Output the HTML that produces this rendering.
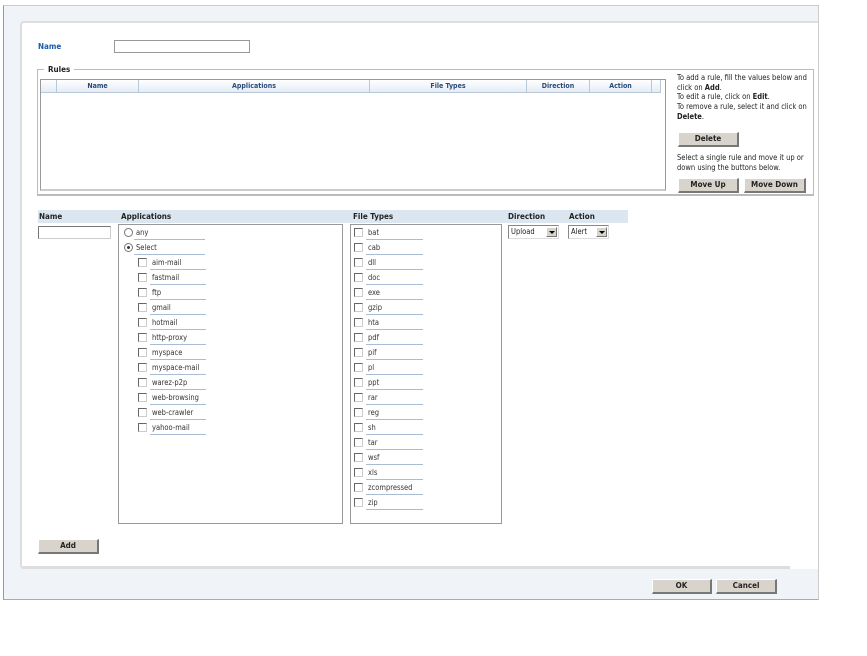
<!DOCTYPE html>
<html><head><style>
*{margin:0;padding:0;box-sizing:border-box}
body{width:867px;height:656px;background:#fff;position:relative;font-family:"DejaVu Sans Condensed","Liberation Sans",sans-serif;font-size:8px;color:#222;overflow:hidden}
.a{position:absolute}
.btn{position:absolute;background:#d8d4cc;border:1px solid #fff;border-right:2px solid #777;border-bottom:2px solid #777;font-weight:bold;font-size:8px;text-align:center;line-height:11px;color:#222}
.lab{position:absolute;font-weight:bold;font-size:8px;color:#222}
.th{position:absolute;top:80px;height:13px;border-right:1px solid #b8c8d8;color:#2a4a7a;font-weight:bold;font-size:7px;text-align:center;line-height:13px}
.cb{position:absolute;width:9px;height:9px;border:1px solid #666;border-right-color:#ccc;border-bottom-color:#ccc;background:#fff}
.it{position:absolute;font-size:7.5px;color:#333;border-bottom:1px solid #a8bcd4;height:13px;line-height:11px;padding-left:2px}
.inp{position:absolute;background:#fff;border:1px solid #888;border-right-color:#ddd;border-bottom-color:#ddd}
</style></head><body>
<div class="a" style="left:3px;top:5px;width:816px;height:595px;background:#f0f4f9;border-left:1px solid #999;border-top:1px solid #ccc;border-right:1px solid #ccc;border-bottom:1px solid #aaa"></div>
<div class="a" style="left:20px;top:21px;width:798px;height:548px;background:#fff;border-left:2px solid #ddd;border-top:2px solid #ddd;border-radius:4px 0 0 4px"></div>
<div class="a" style="left:22px;top:566px;width:768px;height:3px;background:#ddd"></div>

<div class="lab" style="left:38px;top:42px;color:#1a5aa8">Name</div>
<div class="inp" style="left:114px;top:40px;width:136px;height:13px;border:1px solid #999"></div>

<div class="a" style="left:37px;top:69px;width:777px;height:127px;border:1px solid #bbb;border-bottom:2px solid #bbb"></div>
<div class="lab" style="left:44px;top:65px;background:#fff;padding:0 4px 0 4px">Rules</div>
<div class="a" style="left:40px;top:79px;width:626px;height:112px;border:1px solid #999;border-bottom:2px solid #ccc;background:#fff"></div>
<div class="a" style="left:41px;top:80px;width:620px;height:13px;background:linear-gradient(#fff,#e4ecf4);border-bottom:1px solid #b8c8d8"></div>
<div class="th" style="left:41px;width:16px"></div>
<div class="th" style="left:57px;width:82px">Name</div>
<div class="th" style="left:139px;width:231px">Applications</div>
<div class="th" style="left:370px;width:157px">File Types</div>
<div class="th" style="left:527px;width:63px">Direction</div>
<div class="th" style="left:590px;width:62px">Action</div>
<div class="th" style="left:652px;width:9px"></div>

<div class="a" style="left:677px;top:73px;width:135px;font-size:7.5px;line-height:9.7px;color:#222">To add a rule, fill the values below and click on <b>Add</b>.<br>To edit a rule, click on <b>Edit</b>.<br>To remove a rule, select it and click on <b>Delete</b>.</div>
<div class="btn" style="left:678px;top:132px;width:61px;height:15px;line-height:12px">Delete</div>
<div class="a" style="left:677px;top:153px;width:135px;font-size:7.5px;line-height:9.7px">Select a single rule and move it up or down using the buttons below.</div>
<div class="btn" style="left:678px;top:178px;width:61px;height:15px;line-height:12px">Move Up</div>
<div class="btn" style="left:744px;top:178px;width:62px;height:15px;line-height:12px">Move Down</div>

<div class="a" style="left:38px;top:210px;width:590px;height:13px;background:#dce6f0"></div>
<div class="lab" style="left:39px;top:212px">Name</div>
<div class="lab" style="left:121px;top:212px">Applications</div>
<div class="lab" style="left:353px;top:212px">File Types</div>
<div class="lab" style="left:508px;top:212px">Direction</div>
<div class="lab" style="left:569px;top:212px">Action</div>

<div class="inp" style="left:38px;top:226px;width:73px;height:13px;border:1px solid #777;border-right-color:#ccc;border-bottom-color:#ccc"></div>

<div class="a" style="left:118px;top:224px;width:225px;height:300px;border:1px solid #999"></div>
<div class="a" style="left:350px;top:224px;width:152px;height:300px;border:1px solid #999"></div>

<div class="a" style="left:124px;top:228px;width:9px;height:9px;border-radius:50%;border:1px solid #777;background:#fff"></div>
<div class="it" style="left:134px;top:227px;width:71px">any</div>
<div class="a" style="left:124px;top:243px;width:9px;height:9px;border-radius:50%;border:1px solid #777;background:radial-gradient(#333 25%,#fff 35%)"></div>
<div class="it" style="left:134px;top:242px;width:71px">Select</div>

<div class="cb" style="left:138px;top:258px"></div><div class="it" style="left:150px;top:257px;width:56px">aim-mail</div>
<div class="cb" style="left:138px;top:273px"></div><div class="it" style="left:150px;top:272px;width:56px">fastmail</div>
<div class="cb" style="left:138px;top:288px"></div><div class="it" style="left:150px;top:287px;width:56px">ftp</div>
<div class="cb" style="left:138px;top:303px"></div><div class="it" style="left:150px;top:302px;width:56px">gmail</div>
<div class="cb" style="left:138px;top:318px"></div><div class="it" style="left:150px;top:317px;width:56px">hotmail</div>
<div class="cb" style="left:138px;top:333px"></div><div class="it" style="left:150px;top:332px;width:56px">http-proxy</div>
<div class="cb" style="left:138px;top:348px"></div><div class="it" style="left:150px;top:347px;width:56px">myspace</div>
<div class="cb" style="left:138px;top:363px"></div><div class="it" style="left:150px;top:362px;width:56px">myspace-mail</div>
<div class="cb" style="left:138px;top:378px"></div><div class="it" style="left:150px;top:377px;width:56px">warez-p2p</div>
<div class="cb" style="left:138px;top:393px"></div><div class="it" style="left:150px;top:392px;width:56px">web-browsing</div>
<div class="cb" style="left:138px;top:408px"></div><div class="it" style="left:150px;top:407px;width:56px">web-crawler</div>
<div class="cb" style="left:138px;top:423px"></div><div class="it" style="left:150px;top:422px;width:56px">yahoo-mail</div>

<div class="cb" style="left:354px;top:228px"></div><div class="it" style="left:366px;top:227px;width:57px">bat</div>
<div class="cb" style="left:354px;top:243px"></div><div class="it" style="left:366px;top:242px;width:57px">cab</div>
<div class="cb" style="left:354px;top:258px"></div><div class="it" style="left:366px;top:257px;width:57px">dll</div>
<div class="cb" style="left:354px;top:273px"></div><div class="it" style="left:366px;top:272px;width:57px">doc</div>
<div class="cb" style="left:354px;top:288px"></div><div class="it" style="left:366px;top:287px;width:57px">exe</div>
<div class="cb" style="left:354px;top:303px"></div><div class="it" style="left:366px;top:302px;width:57px">gzip</div>
<div class="cb" style="left:354px;top:318px"></div><div class="it" style="left:366px;top:317px;width:57px">hta</div>
<div class="cb" style="left:354px;top:333px"></div><div class="it" style="left:366px;top:332px;width:57px">pdf</div>
<div class="cb" style="left:354px;top:348px"></div><div class="it" style="left:366px;top:347px;width:57px">pif</div>
<div class="cb" style="left:354px;top:363px"></div><div class="it" style="left:366px;top:362px;width:57px">pl</div>
<div class="cb" style="left:354px;top:378px"></div><div class="it" style="left:366px;top:377px;width:57px">ppt</div>
<div class="cb" style="left:354px;top:393px"></div><div class="it" style="left:366px;top:392px;width:57px">rar</div>
<div class="cb" style="left:354px;top:408px"></div><div class="it" style="left:366px;top:407px;width:57px">reg</div>
<div class="cb" style="left:354px;top:423px"></div><div class="it" style="left:366px;top:422px;width:57px">sh</div>
<div class="cb" style="left:354px;top:438px"></div><div class="it" style="left:366px;top:437px;width:57px">tar</div>
<div class="cb" style="left:354px;top:453px"></div><div class="it" style="left:366px;top:452px;width:57px">wsf</div>
<div class="cb" style="left:354px;top:468px"></div><div class="it" style="left:366px;top:467px;width:57px">xls</div>
<div class="cb" style="left:354px;top:483px"></div><div class="it" style="left:366px;top:482px;width:57px">zcompressed</div>
<div class="cb" style="left:354px;top:498px"></div><div class="it" style="left:366px;top:497px;width:57px">zip</div>

<div class="inp" style="left:508px;top:225px;width:51px;height:14px;font-size:7.5px;line-height:12px;padding-left:2px">Upload</div>
<div class="a" style="left:546px;top:227px;width:11px;height:10px;background:#d8d4cc;border:1px solid #fff;border-right-color:#777;border-bottom-color:#777"><div class="a" style="left:2px;top:3px;border-left:3px solid transparent;border-right:3px solid transparent;border-top:3px solid #000"></div></div>
<div class="inp" style="left:568px;top:225px;width:41px;height:14px;font-size:7.5px;line-height:12px;padding-left:2px">Alert</div>
<div class="a" style="left:596px;top:227px;width:11px;height:10px;background:#d8d4cc;border:1px solid #fff;border-right-color:#777;border-bottom-color:#777"><div class="a" style="left:2px;top:3px;border-left:3px solid transparent;border-right:3px solid transparent;border-top:3px solid #000"></div></div>

<div class="btn" style="left:38px;top:539px;width:61px;height:15px;line-height:12px">Add</div>
<div class="btn" style="left:652px;top:579px;width:60px;height:15px;line-height:12px">OK</div>
<div class="btn" style="left:716px;top:579px;width:61px;height:15px;line-height:12px">Cancel</div>
</body></html>
